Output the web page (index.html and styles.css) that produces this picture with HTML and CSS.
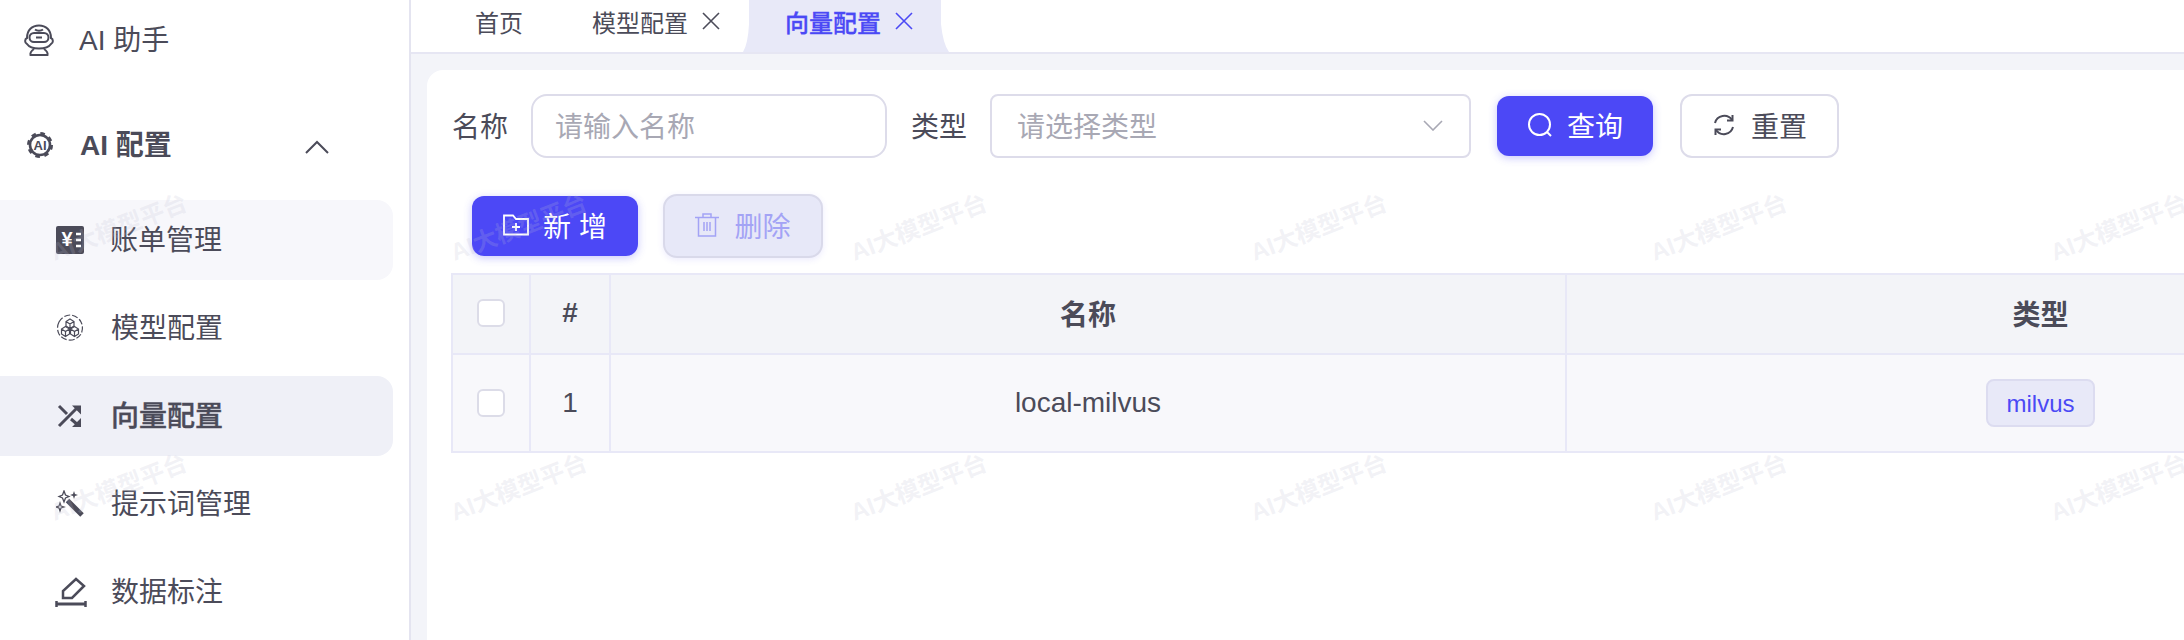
FILE: index.html
```html
<!DOCTYPE html>
<html>
  <head>
    <title>向量配置</title>
    <link rel="stylesheet" href="styles.css">
  </head>

  <body>
    <div class="app">
      <aside class="sidebar">
        <div class="menu-item">
          <svg class="icon-robot" viewBox="0 0 32 32" fill="none" stroke="#4b4b59" stroke-width="2">
            <path d="M4 14C4 6 9 1.500 16 1.500S28 6 28 14C30.500 15 30.500 19 28 20C26 23 21 24.500 16 24.500S6 23 4 20C1.500 19 1.500 15 4 14Z"/>
            <rect x="6.500" y="9" width="19" height="9" rx="4.500"/>
            <path d="M12 5.500C14 7 18 7 20 5.500M13 13.500H19"/>
            <path d="M11 25C8 27 7 29 7.500 31H24.500C25 29 24 27 21 25"/>
          </svg>
          <span>AI 助手</span>
        </div>

        <div class="menu-item menu-group">
          <svg class="icon-gear" viewBox="0 0 26 26" fill="none" stroke="#4b4b59">
            <circle cx="13" cy="13" r="10" stroke-width="2.600"/>
            <circle cx="13" cy="13" r="11.500" stroke-width="3" stroke-dasharray="4.500 4.530"/>
            <text x="13" y="18" text-anchor="middle" class="gear-text">AI</text>
          </svg>
          <span>AI 配置</span>
          <svg class="icon-up" viewBox="0 0 24 14" fill="none" stroke="#4b4b59" stroke-width="2">
            <path d="M1 13L12 2L23 13"/>
          </svg>
        </div>

        <div class="sub-menu">
          <div class="sub-item sub-hover">
            <svg class="icon-item" viewBox="0 0 28 28">
              <rect width="28" height="28" rx="2" fill="#4b4b59"/>
              <text x="11" y="20" text-anchor="middle" class="bill-text">¥</text>
              <path d="M20 8H25M20 14H25M20 20H25" stroke="#fff" stroke-width="2.500"/>
            </svg>
            <span>账单管理</span>
          </div>
          <div class="sub-item">
            <svg class="icon-item" viewBox="0 0 28 28" fill="none" stroke="#4b4b59" stroke-width="1.200">
              <path d="M3 8A13 13 0 0 0 3 20A13 13 0 0 0 25 20A13 13 0 0 0 25 8A13 13 0 0 0 14 1A13 13 0 0 0 3 8Z" stroke-dasharray="6 2"/>
              <path d="M14 5L18 7.500V12L14 14.500L10 12V7.500ZM10 7.500L14 10L18 7.500M14 10V14.500"/>
              <path d="M9.500 12.500L13.500 15V20L9.500 22.500L5.500 20V15ZM5.500 15L9.500 17.500L13.500 15M9.500 17.500V22.500"/>
              <path d="M18.500 12.500L22.500 15V20L18.500 22.500L14.500 20V15ZM14.500 15L18.500 17.500L22.500 15M18.500 17.500V22.500"/>
            </svg>
            <span>模型配置</span>
          </div>
          <div class="sub-item sub-active">
            <svg class="icon-item" viewBox="0 0 28 28" fill="none" stroke="#4b4b59" stroke-width="3">
              <path d="M3 4L11 12M3 24L22 5M15 17L22 23"/>
              <path d="M16 3.500H25V12.500ZM16 25H25V16Z" fill="#4b4b59" stroke="none"/>
            </svg>
            <span>向量配置</span>
          </div>
          <div class="sub-item">
            <svg class="icon-item" viewBox="0 0 28 28" fill="none" stroke="#4b4b59">
              <path d="M11.500 10.500L26 25" stroke-width="5"/>
              <path d="M8 1L9.500 5L13 6.500L9.500 8L8 12L6.500 8L3 6.500L6.500 5Z" stroke-width="1.300"/>
              <path d="M18 1L19 4L22 5L19 6L18 9L17 6L14 5L17 4Z" fill="#4b4b59" stroke="none"/>
              <path d="M4 13L5 16L8 17L5 18L4 21L3 18L0 17L3 16Z" stroke-width="1.200"/>
            </svg>
            <span>提示词管理</span>
          </div>
          <div class="sub-item">
            <svg class="icon-edit" viewBox="0 0 32 30" fill="none" stroke="#4b4b59" stroke-width="2.500">
              <path d="M21 2L29 9L17 21H8V14Z"/>
              <path d="M1 27H31" stroke-width="3"/>
              <path d="M1.500 24V30M30.500 24V30" stroke-width="2.500"/>
            </svg>
            <span>数据标注</span>
          </div>
        </div>
      </aside>

      <main class="main">
        <div class="tabs">
          <div class="tab tab-home">首页</div>
          <div class="tab">
            模型配置
            <svg class="icon-close" viewBox="0 0 18 18" fill="none" stroke="currentColor" stroke-width="1.600"><path d="M1 1L17 17M17 1L1 17"/></svg>
          </div>
          <div class="tab tab-active">
            向量配置
            <svg class="icon-close" viewBox="0 0 18 18" fill="none" stroke="currentColor" stroke-width="1.600"><path d="M1 1L17 17M17 1L1 17"/></svg>
          </div>
        </div>

        <div class="content">
          <div class="card">
            <div class="search-row">
              <label class="search-label">名称</label>
              <div class="search-input">请输入名称</div>
              <label class="search-label type-label">类型</label>
              <div class="search-select">
                请选择类型
                <svg class="icon-down" viewBox="0 0 20 11" fill="none" stroke="#a8a8b4" stroke-width="1.600"><path d="M1 1L10 10L19 1"/></svg>
              </div>
              <button class="btn btn-primary btn-query">
                <svg class="icon-btn" viewBox="0 0 26 26" fill="none" stroke="#fff" stroke-width="2"><circle cx="12.500" cy="12.500" r="10.500"/><path d="M20 20L24 24"/></svg>
                查询
              </button>
              <button class="btn btn-reset">
                <svg class="icon-btn-small" viewBox="0 0 24 24" fill="none" stroke="#4b4b59" stroke-width="2"><path d="M3 10A9.500 9.500 0 0 1 20 7M21 14A9.500 9.500 0 0 1 4 17"/><path d="M20.500 2V7.500H15M3.500 22V16.500H9"/></svg>
                重置
              </button>
            </div>

            <div class="tool-row">
              <button class="btn btn-primary btn-add">
                <svg class="icon-folder" viewBox="0 0 26 22" fill="none" stroke="#fff" stroke-width="1.800"><path d="M1 20.500V1.500H10L13 5H25V20.500ZM13 9V17M9 13H17"/></svg>
                新增
              </button>
              <button class="btn btn-disabled">
                <svg class="icon-trash" viewBox="0 0 24 24" fill="none" stroke="#a3a3f5" stroke-width="1.500"><path d="M0 4.500H24M8 4.500V1H16V4.500M3.500 4.500V23H20.500V4.500M9 9V18M15 9V18M12 9V18"/></svg>
                删除
              </button>
            </div>

            <table class="data-table">
              <colgroup>
                <col class="col-check">
                <col class="col-index">
                <col class="col-name">
                <col class="col-type">
              </colgroup>
              <thead>
                <tr>
                  <th><span class="checkbox"></span></th>
                  <th>#</th>
                  <th>名称</th>
                  <th>类型</th>
                </tr>
              </thead>
              <tbody>
                <tr>
                  <td><span class="checkbox"></span></td>
                  <td>1</td>
                  <td>local-milvus</td>
                  <td><span class="tag">milvus</span></td>
                </tr>
              </tbody>
            </table>
          </div>
        </div>
      </main>

      <!-- watermark laid over the whole page -->
      <div class="watermark">
        <span>AI大模型平台</span><span>AI大模型平台</span><span>AI大模型平台</span><span>AI大模型平台</span><span>AI大模型平台</span><span>AI大模型平台</span>
        <span>AI大模型平台</span><span>AI大模型平台</span><span>AI大模型平台</span><span>AI大模型平台</span><span>AI大模型平台</span><span>AI大模型平台</span>
      </div>
    </div>
  </body>
</html>
```

FILE: styles.css
```css
body {
  margin: 0;
  background-color: #fff;
  color: #4b4b59;
  font-family: "Liberation Sans", "Noto Sans CJK SC", sans-serif;
  font-size: 28px;
}

.app {
  position: relative;
  display: flex;
  width: 2184px;
  height: 640px;
  overflow: hidden;
}

/* sidebar */
.sidebar {
  flex: none;
  width: 393px;
  padding-right: 16px;
  border-right: 2px solid #e4e4f0;
}

.menu-item {
  display: flex;
  align-items: center;
  height: 80px;
}

.menu-item span {
  margin-left: 24px;
  margin-bottom: 4px;
}

.menu-group {
  margin-top: 25px;
  font-weight: bold;
}

.icon-robot {
  width: 32px;
  height: 32px;
  margin-left: 23px;
}

.icon-gear {
  width: 26px;
  height: 26px;
  margin-left: 27px;
  overflow: visible;
}

.menu-group span {
  margin-left: 27px;
}

.gear-text {
  font-size: 13px;
  font-weight: bold;
  fill: #4b4b59;
  stroke: none;
}

.bill-text {
  font-size: 20px;
  font-weight: bold;
  fill: #fff;
}

.icon-up {
  width: 24px;
  height: 14px;
  margin-left: 133px;
  margin-top: 3px;
}

.sub-menu {
  margin-top: 15px;
}

.sub-item {
  display: flex;
  align-items: center;
  height: 80px;
  margin-bottom: 8px;
  padding-left: 56px;
  border-radius: 0 16px 16px 0;
}

.sub-item span {
  margin-left: 27px;
  margin-bottom: 4px;
}

.sub-hover span {
  margin-left: 26px;
}

.sub-hover {
  background-color: #f7f7fb;
}

.sub-active {
  background-color: #eff0f7;
  font-weight: 500;
  -webkit-text-stroke: 0.4px #4b4b59;
}

.icon-item {
  width: 28px;
  height: 28px;
}

.icon-edit {
  width: 32px;
  height: 30px;
  margin-left: -1px;
}

.icon-edit + span {
  margin-left: 24px;
}

/* main area */
.main {
  flex: 1;
  min-width: 0;
  display: flex;
  flex-direction: column;
}

.tabs {
  flex: none;
  display: flex;
  height: 52px;
  padding-left: 22px;
  border-bottom: 2px solid #e6e6f3;
  font-size: 24px;
}

.tab {
  display: flex;
  align-items: center;
  box-sizing: border-box;
  height: 52px;
  padding: 0 23px 10px 42px;
  white-space: nowrap;
}

.tab-home {
  padding-right: 27px;
}

.tab-active {
  width: 206px;
  padding-right: 0;
  background-color: #e8e9f8;
  color: #4b49f5;
  font-weight: 500;
  -webkit-text-stroke: 0.3px #4b49f5;
  clip-path: path("M0 52Q5 44 6 24L6 0L198 0L198 24Q200 44 206 52Z");
}

.icon-close {
  flex: none;
  width: 18px;
  height: 18px;
  margin-left: 14px;
}

.content {
  flex: 1;
  min-height: 0;
  padding: 16px 0 0 16px;
  background-color: #f3f4f9;
}

.card {
  height: 100%;
  overflow: hidden;
  background-color: #fff;
  border-radius: 16px 0 0 0;
}

/* search form */
.search-row {
  display: flex;
  align-items: center;
  height: 64px;
  margin-top: 24px;
  padding-left: 25px;
}

.search-label {
  flex: none;
  width: 56px;
  margin-right: 23px;
  padding-bottom: 2px;
}

.type-label {
  margin-left: 24px;
  margin-right: 23px;
}

.search-input,
.search-select {
  flex: none;
  display: flex;
  align-items: center;
  height: 64px;
  box-sizing: border-box;
  padding-bottom: 2px;
  border: 2px solid #dddcea;
  color: #a8a8b4;
}

.search-input {
  width: 356px;
  padding-left: 22px;
  border-radius: 16px;
}

.search-select {
  width: 481px;
  padding-left: 25px;
  border-radius: 8px;
}

.icon-down {
  width: 20px;
  height: 11px;
  margin-left: auto;
  margin-right: 26px;
}

.btn {
  flex: none;
  display: flex;
  align-items: center;
  justify-content: center;
  box-sizing: border-box;
  padding: 0 0 2px 0;
  font-family: inherit;
  font-size: 28px;
}

.btn-primary {
  height: 60px;
  border: none;
  border-radius: 12px;
  background-color: #4c48f6;
  color: #fff;
  box-shadow: 0 2px 8px rgba(76, 72, 246, 0.3);
}

.btn-query {
  width: 156px;
  margin-left: 26px;
}

.btn-reset {
  width: 159px;
  height: 64px;
  margin-left: 27px;
  border: 2px solid #dddcea;
  border-radius: 12px;
  background-color: #fff;
  color: #4b4b59;
}

.icon-btn {
  width: 26px;
  height: 26px;
  margin-right: 14px;
}

.icon-btn-small {
  width: 24px;
  height: 24px;
  margin-right: 15px;
}

/* toolbar */
.tool-row {
  display: flex;
  align-items: center;
  height: 64px;
  margin-top: 36px;
  padding-left: 45px;
}

.btn-add {
  width: 166px;
  padding-left: 8px;
  letter-spacing: 8px;
}

.icon-folder {
  width: 26px;
  height: 22px;
  margin-right: 14px;
}

.btn-disabled {
  width: 160px;
  height: 64px;
  margin-left: 25px;
  border: 2px solid #d9d9ea;
  border-radius: 14px;
  background-color: #e7e8f8;
  color: #a3a3f5;
  box-shadow: 0 2px 6px rgba(76, 72, 246, 0.1);
}

.icon-trash {
  width: 24px;
  height: 24px;
  margin-right: 15px;
}

/* table */
.data-table {
  table-layout: fixed;
  width: 2063px;
  margin: 15px 0 0 24px;
  border-collapse: collapse;
}

.col-check {
  width: 78px;
}

.col-index {
  width: 80px;
}

.col-name {
  width: 956px;
}

.col-type {
  width: 949px;
}

.data-table th,
.data-table td {
  padding: 0;
  border: 2px solid #e8e8f7;
  text-align: center;
}

.data-table th {
  height: 78px;
  padding-bottom: 2px;
  box-sizing: content-box;
  height: 76px;
  background-color: #f3f4f8;
  font-weight: bold;
}

.data-table td {
  height: 96px;
  background-color: #f8f8fb;
}

.checkbox {
  display: block;
  width: 28px;
  height: 28px;
  margin: 0 auto;
  box-sizing: border-box;
  border: 2px solid #dcdce8;
  border-radius: 6px;
  background-color: #fff;
}

.tag {
  display: inline-block;
  padding: 0 18px;
  height: 48px;
  line-height: 46px;
  box-sizing: border-box;
  border: 2px solid #dcdcf0;
  border-radius: 8px;
  background-color: #e8e9f8;
  color: #4b49f5;
  font-size: 24px;
}

.watermark {
  position: absolute;
  top: 95px;
  left: -82px;
  display: grid;
  grid-template-columns: repeat(6, 400px);
  grid-template-rows: repeat(2, 260px);
  place-items: center;
  pointer-events: none;
  color: rgba(190, 190, 210, 0.2);
  font-size: 24px;
  font-weight: bold;
}

.watermark span {
  transform: rotate(-21deg);
  white-space: nowrap;
}
```
